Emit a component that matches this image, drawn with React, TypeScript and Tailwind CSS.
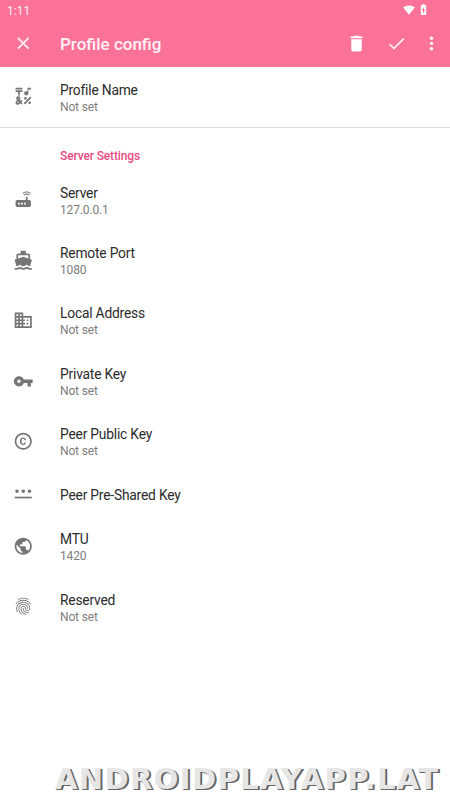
import type { ComponentType } from 'react';
import {
  MdBatteryChargingFull,
  MdCheck,
  MdClose,
  MdCopyright,
  MdDelete,
  MdDirectionsBoat,
  MdDomain,
  MdEmojiSymbols,
  MdFingerprint,
  MdMoreVert,
  MdPublic,
  MdRouter,
  MdSignalWifi4Bar,
  MdVpnKey,
} from 'react-icons/md';

type Preference = {
  title: string;
  summary?: string;
  icon: ComponentType<{ className?: string }>;
};

// three stubby asterisks over a bar
function PasswordIcon({ className }: { className?: string }) {
  return (
    <svg viewBox="0 0 24 24" fill="currentColor" className={className}>
      <path d="M2 16h20v2H2z" />
      <path d="M4.7 7.6v4M2.9 8.6l3.6 2M2.9 10.6l3.6-2M12 7.6v4M10.2 8.6l3.6 2M10.2 10.6l3.6-2M19.3 7.6v4M17.5 8.6l3.6 2M17.5 10.6l3.6-2" stroke="currentColor" strokeWidth="1.5" />
    </svg>
  );
}

const serverSettings: Preference[] = [
  { title: 'Server', summary: '127.0.0.1', icon: MdRouter },
  { title: 'Remote Port', summary: '1080', icon: MdDirectionsBoat },
  { title: 'Local Address', summary: 'Not set', icon: MdDomain },
  { title: 'Private Key', summary: 'Not set', icon: MdVpnKey },
  { title: 'Peer Public Key', summary: 'Not set', icon: MdCopyright },
  { title: 'Peer Pre-Shared Key', icon: PasswordIcon },
  { title: 'MTU', summary: '1420', icon: MdPublic },
  { title: 'Reserved', summary: 'Not set', icon: MdFingerprint },
];

function PreferenceRow({ title, summary, icon: Icon }: Preference) {
  return (
    <div
      className={`flex items-center pl-[13px] ${summary ? 'h-[60.4px]' : 'h-[44.6px]'}`}
    >
      <Icon className="mb-px h-[20.5px] w-[20.5px] shrink-0 text-[#757575]" />
      <div className={`ml-[26.5px] ${summary ? 'pt-[2px]' : 'pt-[1.6px]'}`}>
        <div className="text-[13.8px] leading-[17px] tracking-[-0.2px] text-[#2b2b2b]">{title}</div>
        {summary && (
          <div className="text-[12px] leading-[16px] tracking-[-0.15px] text-[#7d7d7d]">{summary}</div>
        )}
      </div>
    </div>
  );
}

export default function App() {
  return (
    <div className="flex h-[800px] w-[450px] flex-col overflow-hidden bg-white font-['Roboto',sans-serif]">
      <header className="h-[67px] shrink-0 bg-[#fb7299] text-white">
        <div className="flex h-[21px] items-center pr-[20px] pl-[7px] text-[12px]">
          <span className="text-white/85">1:11</span>
          <MdSignalWifi4Bar className="mb-[2px] ml-auto h-[12px] w-[12px]" />
          <MdBatteryChargingFull className="mb-[2px] ml-[2px] h-[13px] w-[13px]" />
        </div>
        <div className="flex h-[46px] items-center pl-[13px]">
          <MdClose className="mb-px h-[20.5px] w-[20.5px] text-white/90" />
          <h1 className="ml-[26.5px] pt-px text-[17px] font-medium text-white/90">Profile config</h1>
          <MdDelete className="mb-px ml-auto h-[21px] w-[21px]" />
          <MdCheck className="mb-px ml-[19px] h-[21px] w-[21px] text-white/85" />
          <MdMoreVert className="mr-[8px] mb-px ml-[14px] h-[21px] w-[21px] text-white/90" />
        </div>
      </header>

      <main className="flex-1">
        <div className="border-b border-[#e0e0e0]">
          <PreferenceRow title="Profile Name" summary="Not set" icon={MdEmojiSymbols} />
        </div>
        <h2 className="h-[41.6px] pt-[20px] pl-[60px] text-[12px] leading-[16px] font-medium tracking-[-0.13px] text-[#e94b83]">
          Server Settings
        </h2>
        {serverSettings.map((item) => (
          <PreferenceRow key={item.title} {...item} />
        ))}
      </main>

      <footer className="h-[40px] shrink-0 pl-[55px] font-['DejaVu_Sans',sans-serif] text-[29px] leading-[38px] font-bold tracking-[1.4px] whitespace-nowrap text-[#e6e6e6] [text-shadow:1px_1px_0_#666,2px_1px_0_#666]">
        ANDROIDPLAYAPP.LAT
      </footer>
    </div>
  );
}
